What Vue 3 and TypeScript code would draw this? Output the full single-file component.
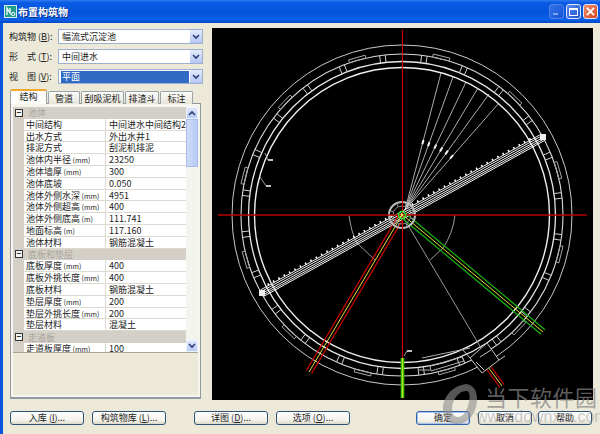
<template>
  <div class="window">
    <div class="titlebar">
      <svg class="app-icon" viewBox="0 0 13 13">
        <rect x="0.5" y="0.5" width="12" height="12" fill="#1f9c8c" stroke="#d8efe8" />
        <path d="M3 10V3l3 5V3" fill="none" stroke="#fff" stroke-width="1.3" />
        <circle cx="9.2" cy="9" r="1.7" fill="none" stroke="#fff" />
      </svg>
      <span class="title">布置构筑物</span>
      <div class="caption-btns">
        <div class="cap cap-min"><i></i></div>
        <div class="cap cap-max"><i></i></div>
        <div class="cap cap-close">
          <svg viewBox="0 0 10 10"><path d="M1 1l8 8M9 1l-8 8" stroke="#fff" stroke-width="2" /></svg>
        </div>
      </div>
    </div>

    <div class="client">
      <div class="main">
        <div class="left">
          <div v-for="f in fields" :key="f.key" class="field">
            <label class="field-label">{{ f.label }} (<u>{{ f.key }}</u>):</label>
            <div class="combo" :class="{ active: f.active }">
              <span class="combo-text">{{ f.value }}</span>
              <span class="combo-btn">
                <svg viewBox="0 0 8 6"><path d="M1 1l3 3 3-3" fill="none" stroke="#2b3f78" stroke-width="1.6" /></svg>
              </span>
            </div>
          </div>

          <div class="tabs">
            <div v-for="(t, i) in tabs" :key="t.name" class="tab" :class="{ on: i === 0 }" :style="{ width: t.w + 'px' }">{{ t.name }}</div>
          </div>

          <div class="tab-panel">
            <div class="grid-wrap">
              <div class="grid">
                <template v-for="(r, i) in rows" :key="i">
                  <div v-if="r.group" class="row group">
                    <span class="toggle">−</span>
                    <span class="group-name">{{ r.group }}</span>
                  </div>
                  <div v-else class="row">
                    <span class="cell-name">{{ r.name }}<small v-if="r.unit"> ({{ r.unit }})</small></span>
                    <span class="cell-value">{{ r.value }}</span>
                  </div>
                </template>
              </div>
              <div class="scrollbar">
                <div class="sb-btn">
                  <svg viewBox="0 0 8 6"><path d="M1 5l3-3 3 3" fill="none" stroke="#2b3f78" stroke-width="1.6" /></svg>
                </div>
                <div class="sb-thumb"></div>
                <div class="sb-track"></div>
                <div class="sb-btn">
                  <svg viewBox="0 0 8 6"><path d="M1 1l3 3 3-3" fill="none" stroke="#2b3f78" stroke-width="1.6" /></svg>
                </div>
              </div>
            </div>
            <div class="desc"></div>
          </div>
        </div>

        <svg class="canvas" viewBox="212 28 381 372">
          <rect x="212" y="28" width="381" height="372" fill="#000" />
          <!-- 池体环线 -->
          <circle v-for="c in rings" :key="c.r" :cx="cx" :cy="cy" :r="c.r" fill="none" :stroke="c.color" :stroke-width="c.w" />
          <path v-for="(d, i) in ringBars" :key="'b' + i" :d="d" stroke="#cfcfcf" stroke-width="1" fill="none" />
          <path v-for="(d, i) in slots" :key="'s' + i" :d="d" stroke="#a8a8a8" stroke-width="1" fill="none" />
          <!-- 布水线 -->
          <line v-for="(p, i) in spokes" :key="'r' + i" :x1="cx + 3" :y1="cy - 5" :x2="p[0]" :y2="p[1]" stroke="#d8d8d8" stroke-width="0.8" />
          <path :d="spokeMarks" stroke="#f4f4f4" stroke-width="2" fill="none" />
          <path d="M349 215Q351 232 357 243L375 260" fill="none" stroke="#9a9a9a" />
          <path d="M455 215Q453 233 443 248L430 260" fill="none" stroke="#9a9a9a" />
          <line :x1="cx" :y1="cy" x2="487" y2="358" stroke="#a8a8a8" stroke-width="0.9" />
          <!-- 刮泥机 -->
          <line v-for="o in [-3.4, -1.6, 0.4, 2.2, 3.8]" :key="'a' + o" :x1="armA[0] + o * 0.48" :y1="armA[1] + o * 0.87" :x2="armB[0] + o * 0.48" :y2="armB[1] + o * 0.87" stroke="#f2f2f2" stroke-width="1" />
          <path :d="serration" stroke="#fff" stroke-width="1.5" fill="none" />
          <rect x="259" y="290" width="6" height="6" fill="#eee" />
          <rect x="540" y="134" width="6" height="6" fill="#eee" />
          <!-- 出水管 -->
          <g v-for="p in pipes" :key="p.id">
            <line v-for="o in [-1, 1]" :key="o" :x1="p.x1 + o * p.nx" :y1="p.y1 + o * p.ny" :x2="p.x2 + o * p.nx" :y2="p.y2 + o * p.ny" :stroke="p.color" stroke-width="1.2" />
            <line :x1="p.x1" :y1="p.y1" :x2="p.x2" :y2="p.y2" stroke="#e4dc3a" stroke-width="1" />
          </g>
          <!-- 出水井 -->
          <path d="M487 343L499 360L482 373L470 358ZM476 362L484 370M491 350L480 357M470 358L462 349M499 360L505 356" fill="#000" stroke="#c4c4c4" />
          <path d="M430 366L462 357L464 361L431 371ZM418 370H430M422 358L470 348" fill="none" stroke="#b0b0b0" />
          <!-- 标注 -->
          <path d="M265 153L268 160M260 177L266 186M404 356L407 351" fill="none" stroke="#bbb" stroke-width="0.8" />
          <path d="M268 160H273M266 186H271M407 351H412" fill="none" stroke="#fff" stroke-width="1.6" />
          <!-- 中心筒 -->
          <circle :cx="cx" :cy="cy" r="13" fill="none" stroke="#bdbdbd" stroke-width="2" />
          <circle :cx="cx" :cy="cy" r="9" fill="none" stroke="#8d8d8d" />
          <path :d="hubSpokes" stroke="#9a9a9a" stroke-width="1" fill="none" />
          <!-- 坐标线 -->
          <line x1="218" y1="215" x2="587" y2="215" stroke="#b80000" stroke-width="1.5" />
          <line x1="402.5" y1="30" x2="402.5" y2="358" stroke="#dd0000" stroke-width="1.1" />
          <line x1="402.5" y1="358" x2="402.5" y2="398" stroke="#3cc800" stroke-width="3.6" />
          <line x1="402.5" y1="358" x2="402.5" y2="398" stroke="#e6e63a" stroke-width="0.8" />
          <circle :cx="cx" :cy="cy" r="3.5" fill="none" stroke="#22e022" stroke-width="1.5" />
          <circle :cx="cx" :cy="cy" r="1.3" fill="#f0f040" />
        </svg>
      </div>

      <div class="footer">
        <button class="btn w74">入库 (<u>I</u>)...</button>
        <button class="btn w74 ml8">构筑物库 (<u>L</u>)...</button>
        <button class="btn w74 ml28">详图 (<u>D</u>)...</button>
        <button class="btn w74 ml8">选项 (<u>O</u>)...</button>
        <button class="btn w54 ml66 default">确定</button>
        <button class="btn w54 ml8">取消</button>
        <button class="btn w54 ml6">帮助</button>
      </div>
    </div>

    <!-- 水印 -->
    <div class="watermark">
      <svg class="wm-logo" viewBox="0 0 36 42">
        <path d="M24 1C10 3 1 14 1 26c0 9 6 15 14 15 13 0 20-13 20-25C35 7 31 2 24 1Zm1 7c3 1 3 6 2 11-2 9-6 15-11 15-4 0-6-3-6-8 0-9 7-19 15-18Z" fill="#8e8e8e" fill-opacity="0.6" />
      </svg>
      <div class="wm-text">
        <div class="wm-cn">当下软件园</div>
        <div class="wm-url">www.downxia.com</div>
      </div>
    </div>
  </div>
</template>

<script setup lang="ts">
interface Row {
  group?: string
  name?: string
  unit?: string
  value?: string
}

const fields = [
  { label: '构筑物', key: 'B', value: '幅流式沉淀池', active: false },
  { label: '形\u3000式', key: 'T', value: '中间进水', active: false },
  { label: '视\u3000图', key: 'V', value: '平面', active: true },
]

const tabs = [
  { name: '结构', w: 37 },
  { name: '管道', w: 32 },
  { name: '刮吸泥机', w: 43 },
  { name: '排渣斗', w: 34 },
  { name: '标注', w: 33 },
]

const rows: Row[] = [
  { group: '池体' },
  { name: '中间结构', value: '中间进水中间结构2' },
  { name: '出水方式', value: '外出水井1' },
  { name: '排泥方式', value: '刮泥机排泥' },
  { name: '池体内半径', unit: 'mm', value: '23250' },
  { name: '池体墙厚', unit: 'mm', value: '300' },
  { name: '池体底坡', value: '0.050' },
  { name: '池体外侧水深', unit: 'mm', value: '4951' },
  { name: '池体外侧超高', unit: 'mm', value: '400' },
  { name: '池体外侧底高', unit: 'm', value: '111.741' },
  { name: '地面标高', unit: 'm', value: '117.160' },
  { name: '池体材料', value: '钢筋混凝土' },
  { group: '底板和垫层' },
  { name: '底板厚度', unit: 'mm', value: '400' },
  { name: '底板外挑长度', unit: 'mm', value: '400' },
  { name: '底板材料', value: '钢筋混凝土' },
  { name: '垫层厚度', unit: 'mm', value: '200' },
  { name: '垫层外挑长度', unit: 'mm', value: '200' },
  { name: '垫层材料', value: '混凝土' },
  { group: '走道板' },
  { name: '走道板厚度', unit: 'mm', value: '100' },
]

// 图形中心
const cx = 402
const cy = 215

const rings = [
  { r: 170, color: '#c8c8c8', w: 1 },
  { r: 161, color: '#d8d8d8', w: 1.1 },
  { r: 153.5, color: '#e8e8e8', w: 1.3 },
  { r: 147.5, color: '#f0f0f0', w: 1.4 },
]

function polar(deg: number, r: number): [number, number] {
  const a = (deg * Math.PI) / 180
  return [cx + r * Math.sin(a), cy - r * Math.cos(a)]
}

function seg(deg: number, r1: number, r2: number): string {
  const [x1, y1] = polar(deg, r1)
  const [x2, y2] = polar(deg, r2)
  return `M${x1.toFixed(1)} ${y1.toFixed(1)}L${x2.toFixed(1)} ${y2.toFixed(1)}`
}

// 走道板支撑，每 15 度一根
const ringBars: string[] = []
for (let a = 8; a < 360; a += 15) {
  ringBars.push(seg(a - 1, 153.5, 161) + seg(a + 1, 153.5, 161))
}

// 外圈的长圆形槽
const slots: string[] = []
for (let a = 0; a < 360; a += 30) {
  const deg = a + 14
  const [x1, y1] = polar(deg - 3, 164)
  const [x2, y2] = polar(deg + 3, 164)
  const [x3, y3] = polar(deg + 3, 161)
  const [x4, y4] = polar(deg - 3, 161)
  slots.push(`M${x1} ${y1}L${x2} ${y2}L${x3} ${y3}L${x4} ${y4}Z`)
}

// 中心筒的辐条
let hub = ''
for (let a = 20; a < 360; a += 45) hub += seg(a, 9, 13)
const hubSpokes = hub

const spokes: [number, number][] = [
  [441, 73],
  [453, 77],
  [466, 82],
  [478, 88],
  [489, 94],
  [499, 103],
]

// 布水线中段的亮点
const spokeMarks = spokes
  .map((p) => {
    const t = 0.48
    const x = cx + 3 + (p[0] - cx - 3) * t
    const y = cy - 5 + (p[1] - cy + 5) * t
    const dx = (p[0] - cx) * 0.03
    const dy = (p[1] - cy) * 0.03
    return `M${x.toFixed(1)} ${y.toFixed(1)}l${dx.toFixed(1)} ${dy.toFixed(1)}`
  })
  .join('')

const armA: [number, number] = [262, 293]
const armB: [number, number] = [543, 137]

// 刮泥机上沿的锯齿
let teeth = ''
for (let t = 0.03; t < 0.98; t += 0.019) {
  if (t > 0.47 && t < 0.53) continue
  const x = armA[0] + (armB[0] - armA[0]) * t - 1.6
  const y = armA[1] + (armB[1] - armA[1]) * t - 3
  teeth += `M${x.toFixed(1)} ${y.toFixed(1)}l-1 -2`
}
const serration = teeth

function pipe(id: string, x1: number, y1: number, x2: number, y2: number, off: number, color: string) {
  const len = Math.hypot(x2 - x1, y2 - y1)
  return { id, x1, y1, x2, y2, color, nx: (-(y2 - y1) / len) * off, ny: ((x2 - x1) / len) * off }
}

const pipes = [
  pipe('sw', 402, 215, 309, 372, 3, '#d80000'),
  pipe('se', 404, 216, 543, 332, 3, '#14b414'),
  pipe('out', 488, 367, 502, 386, 2.5, '#d80000'),
]
</script>

<style scoped>
.window {
  position: relative;
  width: 600px;
  height: 434px;
  overflow: hidden;
  display: flex;
  flex-direction: column;
  font-family: "Noto Sans CJK SC", "Liberation Sans", sans-serif;
  font-size: 9px;
  color: #222;
  background: #ece9d8;
}

.titlebar {
  height: 23px;
  flex: none;
  display: flex;
  align-items: center;
  padding: 0 2px 0 4px;
  background: linear-gradient(180deg, #2f7af0 0%, #0a5be4 12%, #0654dc 55%, #0a5fe8 85%, #0447c4 100%);
}

.app-icon {
  width: 13px;
  height: 13px;
  margin-right: 1px;
}

.title {
  color: #fff;
  font-size: 10px;
  font-weight: 700;
  text-shadow: 1px 1px 0 #0a2a80;
}

.caption-btns {
  margin-left: auto;
  display: flex;
  gap: 2px;
}

.cap {
  width: 15px;
  height: 15px;
  border: 1px solid #dfe8fb;
  border-radius: 3px;
  box-sizing: border-box;
  display: flex;
  align-items: center;
  justify-content: center;
  background: linear-gradient(135deg, #5b8cf0, #1f50d0);
}

.cap-min {
  opacity: 0.55;
  border-color: #8aa8ef;
  margin-right: 0;
  align-items: flex-end;
  justify-content: flex-start;
  padding: 0 0 3px 3px;
}

.cap-min i {
  display: block;
  width: 5px;
  height: 2px;
  background: #dfe8fb;
}

.cap-max i {
  display: block;
  width: 9px;
  height: 8px;
  box-sizing: border-box;
  border: 1px solid #fff;
  border-top-width: 2px;
}

.cap-close {
  background: linear-gradient(135deg, #f09070, #d8441c);
}

.cap-close svg {
  width: 9px;
  height: 9px;
}

.client {
  flex: 1;
  display: flex;
  flex-direction: column;
  border-left: 3px solid #0a55dc;
  padding: 5px 7px 0 6px;
  min-height: 0;
}

.main {
  display: flex;
  gap: 9px;
  height: 372px;
}

.left {
  width: 194px;
  flex: none;
  padding-top: 1px;
}

.field {
  display: flex;
  align-items: center;
  height: 15px;
  margin-bottom: 5px;
}

.field-label {
  width: 49px;
  flex: none;
  white-space: nowrap;
}

.combo {
  flex: 1;
  height: 15px;
  box-sizing: border-box;
  border: 1px solid #9db0d0;
  background: #fff;
  display: flex;
  align-items: center;
  padding-left: 2px;
}

.combo-text {
  flex: 1;
  padding-left: 1px;
  line-height: 12px;
}

.combo.active .combo-text {
  background: #316ac5;
  color: #fff;
  margin-right: 1px;
}

.combo-btn {
  width: 12px;
  height: 13px;
  flex: none;
  display: flex;
  align-items: center;
  justify-content: center;
  background: linear-gradient(180deg, #e4ebfb, #b4c6f2);
}

.combo-btn svg,
.sb-btn svg {
  width: 8px;
  height: 6px;
}

.tabs {
  display: flex;
  margin: 6px 0 0 1px;
  height: 14px;
  position: relative;
  z-index: 1;
  gap: 1px;
}

.tab {
  box-sizing: border-box;
  height: 13px;
  margin-top: 1px;
  text-align: center;
  line-height: 13px;
  background: linear-gradient(180deg, #fbfbf8, #e8e6da);
  border: 1px solid #9aa4a8;
  border-bottom: none;
  border-radius: 2px 2px 0 0;
}

.tab.on {
  height: 15px;
  margin-top: -1px;
  background: #fcfcfa;
  border-top: 2px solid #f0a830;
  line-height: 12px;
}

.tab-panel {
  box-sizing: border-box;
  width: 191px;
  margin-left: 1px;
  height: 296px;
  margin-top: -1px;
  border: 1px solid #8f9ba0;
  border-bottom-width: 2px;
  background: #f6f5ee;
  padding: 3px 2px 2px;
  display: flex;
  flex-direction: column;
}

.grid-wrap {
  height: 245px;
  flex: none;
  display: flex;
  overflow: hidden;
}

.grid {
  flex: 1;
  overflow: hidden;
  background: #d4d0c8;
}

.row {
  height: 11.8px;
  display: flex;
  margin-left: 11px;
  line-height: 11px;
  background: #fff;
  box-shadow: inset 0 -1px 0 #dcd9d0;
  white-space: nowrap;
}

.row.group {
  margin-left: 0;
  background: #d4d0c8;
  box-shadow: none;
  align-items: center;
}

.toggle {
  width: 8px;
  height: 8px;
  box-sizing: border-box;
  border: 1px solid #333;
  background: #f4f4f0;
  margin: 0 5px 0 2px;
  line-height: 5px;
  text-align: center;
  font-family: "Liberation Sans", sans-serif;
  font-size: 8px;
  font-weight: 700;
}

.group-name {
  color: #a9a59c;
}

.cell-name {
  width: 82px;
  flex: none;
  padding-left: 2px;
  box-sizing: border-box;
  border-right: 1px solid #dcd9d0;
}

.cell-name small {
  font-size: 7px;
}

.cell-value {
  padding-left: 3px;
  flex: 1;
}

.scrollbar {
  width: 12px;
  flex: none;
  display: flex;
  flex-direction: column;
  background: #f4f4ee;
}

.sb-btn {
  height: 12px;
  flex: none;
  display: flex;
  align-items: center;
  justify-content: center;
  background: linear-gradient(180deg, #dfe8fb, #b8caf4);
  border: 1px solid #eef2fc;
  box-sizing: border-box;
}

.sb-thumb {
  height: 48px;
  flex: none;
  background: linear-gradient(90deg, #cfdcf8, #b8cbf5);
  border: 1px solid #a8bcec;
  box-sizing: border-box;
}

.sb-track {
  flex: 1;
}

.desc {
  flex: 1;
  background: #ece9d8;
  border-top: 1px solid #a8a498;
}

.canvas {
  width: 381px;
  height: 372px;
  flex: none;
  display: block;
}

.footer {
  display: flex;
  margin-top: 11px;
  padding-left: 1px;
}

.btn {
  height: 14px;
  padding: 0;
  box-sizing: border-box;
  border: 1px solid #2f5378;
  border-radius: 3px;
  background: linear-gradient(180deg, #fff, #f2f1ea 70%, #dcd8c8);
  font-family: inherit;
  font-size: 9px;
  line-height: 12px;
  color: #222;
}

.btn.default {
  border-color: #2f62a8;
  box-shadow: inset 0 0 0 1px #a8c4ee;
}

.w74 {
  width: 74px;
}

.w54 {
  width: 54px;
}

.ml6 {
  margin-left: 6px;
}

.ml8 {
  margin-left: 8px;
}

.ml28 {
  margin-left: 28px;
}

.ml66 {
  margin-left: 66px;
}

.watermark {
  position: absolute;
  left: 442px;
  top: 383px;
  display: flex;
  pointer-events: none;
}

.wm-logo {
  width: 36px;
  height: 42px;
  flex: none;
}

.wm-text {
  margin-left: -2px;
}

.wm-cn {
  margin-left: 9px;
  font-size: 22px;
  line-height: 26px;
  letter-spacing: 0.5px;
  color: rgba(132, 132, 132, 0.72);
  white-space: nowrap;
}

.wm-url {
  font-family: "Liberation Sans", sans-serif;
  font-size: 16px;
  line-height: 16px;
  color: rgba(132, 132, 132, 0.42);
  white-space: nowrap;
}
</style>
